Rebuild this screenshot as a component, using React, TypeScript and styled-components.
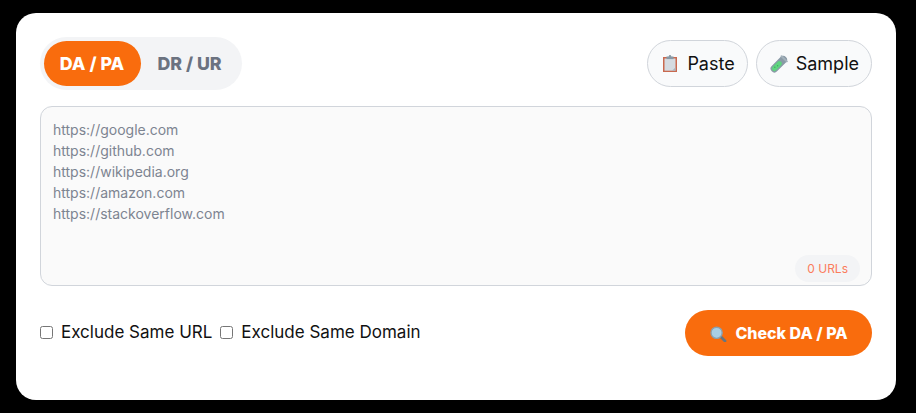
import React, { useState } from 'react';
import styled, { createGlobalStyle } from 'styled-components';

const GlobalStyle = createGlobalStyle`
  html, body {
    margin: 0;
    height: 100%;
    background: #000;
    overflow: hidden;
  }
  body, button, textarea {
    font-family: Inter, "Liberation Sans", sans-serif;
  }
`;

const Page = styled.div`
  box-sizing: border-box;
  width: 916px;
  height: 413px;
  padding: 13px 20px 13px 16px;
`;

const Card = styled.main`
  box-sizing: border-box;
  height: 387px;
  padding: 24px 24px 44px;
  background: #fff;
  border-radius: 20px;
  display: flex;
  flex-direction: column;
  gap: 16px;
`;

const TopRow = styled.div`
  display: flex;
  align-items: center;
  justify-content: space-between;
`;

const Toggle = styled.div`
  box-sizing: border-box;
  display: flex;
  height: 53px;
  padding: 4px;
  border-radius: 27px;
  background: #f3f4f6;
`;

const ToggleButton = styled.button<{ $active?: boolean }>`
  width: 97px;
  height: 45px;
  padding: 0 ${p => (p.$active ? 1 : 0)}px 0 0;
  border: 0;
  border-radius: 23px;
  font-size: 17.8px;
  font-weight: 800;
  background: ${p => (p.$active ? '#f96c0d' : 'transparent')};
  color: ${p => (p.$active ? '#fff' : '#6b7280')};
  cursor: pointer;
`;

const Tools = styled.div`
  display: flex;
  gap: 8px;
`;

const ToolButton = styled.button`
  box-sizing: border-box;
  display: flex;
  align-items: center;
  gap: 8px;
  height: 47px;
  padding: 0 12px 0 13px;
  border: 1px solid #d1d5db;
  border-radius: 24px;
  background: #f9fafb;
  color: #111;
  font-size: 18px;
  cursor: pointer;
`;

const EditorWrap = styled.div`
  position: relative;
  height: 180px;
`;

const Editor = styled.textarea`
  box-sizing: border-box;
  display: block;
  width: 100%;
  height: 100%;
  padding: 12px;
  border: 1px solid #d1d5db;
  border-radius: 12px;
  background: #fafafa;
  font-size: 14px;
  line-height: 21px;
  color: #111;
  resize: none;
  outline: none;
  &::placeholder {
    color: #7d8491;
    opacity: 1;
  }
`;

const CountBadge = styled.span`
  position: absolute;
  right: 12px;
  bottom: 4px;
  box-sizing: border-box;
  height: 27px;
  padding: 0 12px;
  display: flex;
  align-items: center;
  border-radius: 14px;
  background: #f3f4f6;
  color: #fb7c5c;
  font-size: 12px;
`;

const BottomRow = styled.div`
  display: flex;
  align-items: center;
  justify-content: space-between;
  margin-top: 8px;
`;

const Options = styled.div`
  display: flex;
  gap: 8px;
  margin-bottom: 2px;
`;

const Option = styled.label`
  display: flex;
  align-items: center;
  gap: 8px;
  font-size: 17px;
  color: #111;
`;

const OptionBox = styled.input`
  width: 13px;
  height: 13px;
  margin: 0;
`;

const CheckButton = styled.button`
  display: flex;
  align-items: center;
  gap: 8.5px;
  height: 46px;
  padding: 0 24.5px;
  border: 0;
  border-radius: 23px;
  background: #f96c0d;
  color: #fff;
  font-size: 16px;
  font-weight: 800;
  cursor: pointer;
`;

const ClipboardIcon = () => (
  <svg width="18" height="18" viewBox="0 0 18 18" aria-hidden="true">
    <rect x="2" y="2" width="14" height="15" fill="#c9694f" />
    <rect x="3.5" y="3.5" width="11" height="12.2" fill="#d5dbe1" />
    <path d="M11 15.7 14.5 12.5v3.2z" fill="#aab4bd" />
    <rect x="5.5" y="1.5" width="7" height="2.6" fill="#8899a6" />
    <circle cx="9" cy="1.2" r="1.2" fill="#8899a6" />
  </svg>
);

const TestTubeIcon = () => (
  <svg width="18" height="18" viewBox="0 0 18 18" aria-hidden="true">
    <path d="M13.2 4.8 4.4 13.6" stroke="#8a9aa6" strokeWidth="7.6" strokeLinecap="round" />
    <path d="M9.4 8.6 4.4 13.6" stroke="#5fd37f" strokeWidth="5" strokeLinecap="round" />
    <circle cx="4.8" cy="12.2" r="0.8" fill="#3fae60" />
    <circle cx="7.6" cy="10.8" r="0.7" fill="#3fae60" />
    <path d="M11.6 1.2 16.8 6.4" stroke="#a3b1bb" strokeWidth="2" strokeLinecap="round" />
  </svg>
);

const SearchIcon = () => (
  <svg width="17" height="17" viewBox="0 0 17 17" aria-hidden="true">
    <path d="M10.8 11.8 15 16" stroke="#66757f" strokeWidth="2.8" strokeLinecap="round" />
    <circle cx="6.6" cy="7.8" r="5.6" fill="#a8cfe6" stroke="#8aa0ae" strokeWidth="1.4" />
  </svg>
);

const sampleUrls = [
  'https://google.com',
  'https://github.com',
  'https://wikipedia.org',
  'https://amazon.com',
  'https://stackoverflow.com',
].join('\n');

export default function App() {
  const [mode, setMode] = useState('da');
  const [urls, setUrls] = useState('');
  const count = urls.split('\n').filter(u => u.trim()).length;

  return (
    <Page>
      <GlobalStyle />
      <Card>
        <TopRow>
          <Toggle>
            <ToggleButton $active={mode === 'da'} onClick={() => setMode('da')}>DA / PA</ToggleButton>
            <ToggleButton $active={mode === 'dr'} onClick={() => setMode('dr')}>DR / UR</ToggleButton>
          </Toggle>
          <Tools>
            <ToolButton><ClipboardIcon />Paste</ToolButton>
            <ToolButton onClick={() => setUrls(sampleUrls)}><TestTubeIcon />Sample</ToolButton>
          </Tools>
        </TopRow>
        <EditorWrap>
          <Editor placeholder={sampleUrls} value={urls} onChange={e => setUrls(e.target.value)} />
          <CountBadge>{count} URLs</CountBadge>
        </EditorWrap>
        <BottomRow>
          <Options>
            <Option><OptionBox type="checkbox" />Exclude Same URL</Option>
            <Option><OptionBox type="checkbox" />Exclude Same Domain</Option>
          </Options>
          <CheckButton><SearchIcon />Check {mode === 'da' ? 'DA / PA' : 'DR / UR'}</CheckButton>
        </BottomRow>
      </Card>
    </Page>
  );
}
